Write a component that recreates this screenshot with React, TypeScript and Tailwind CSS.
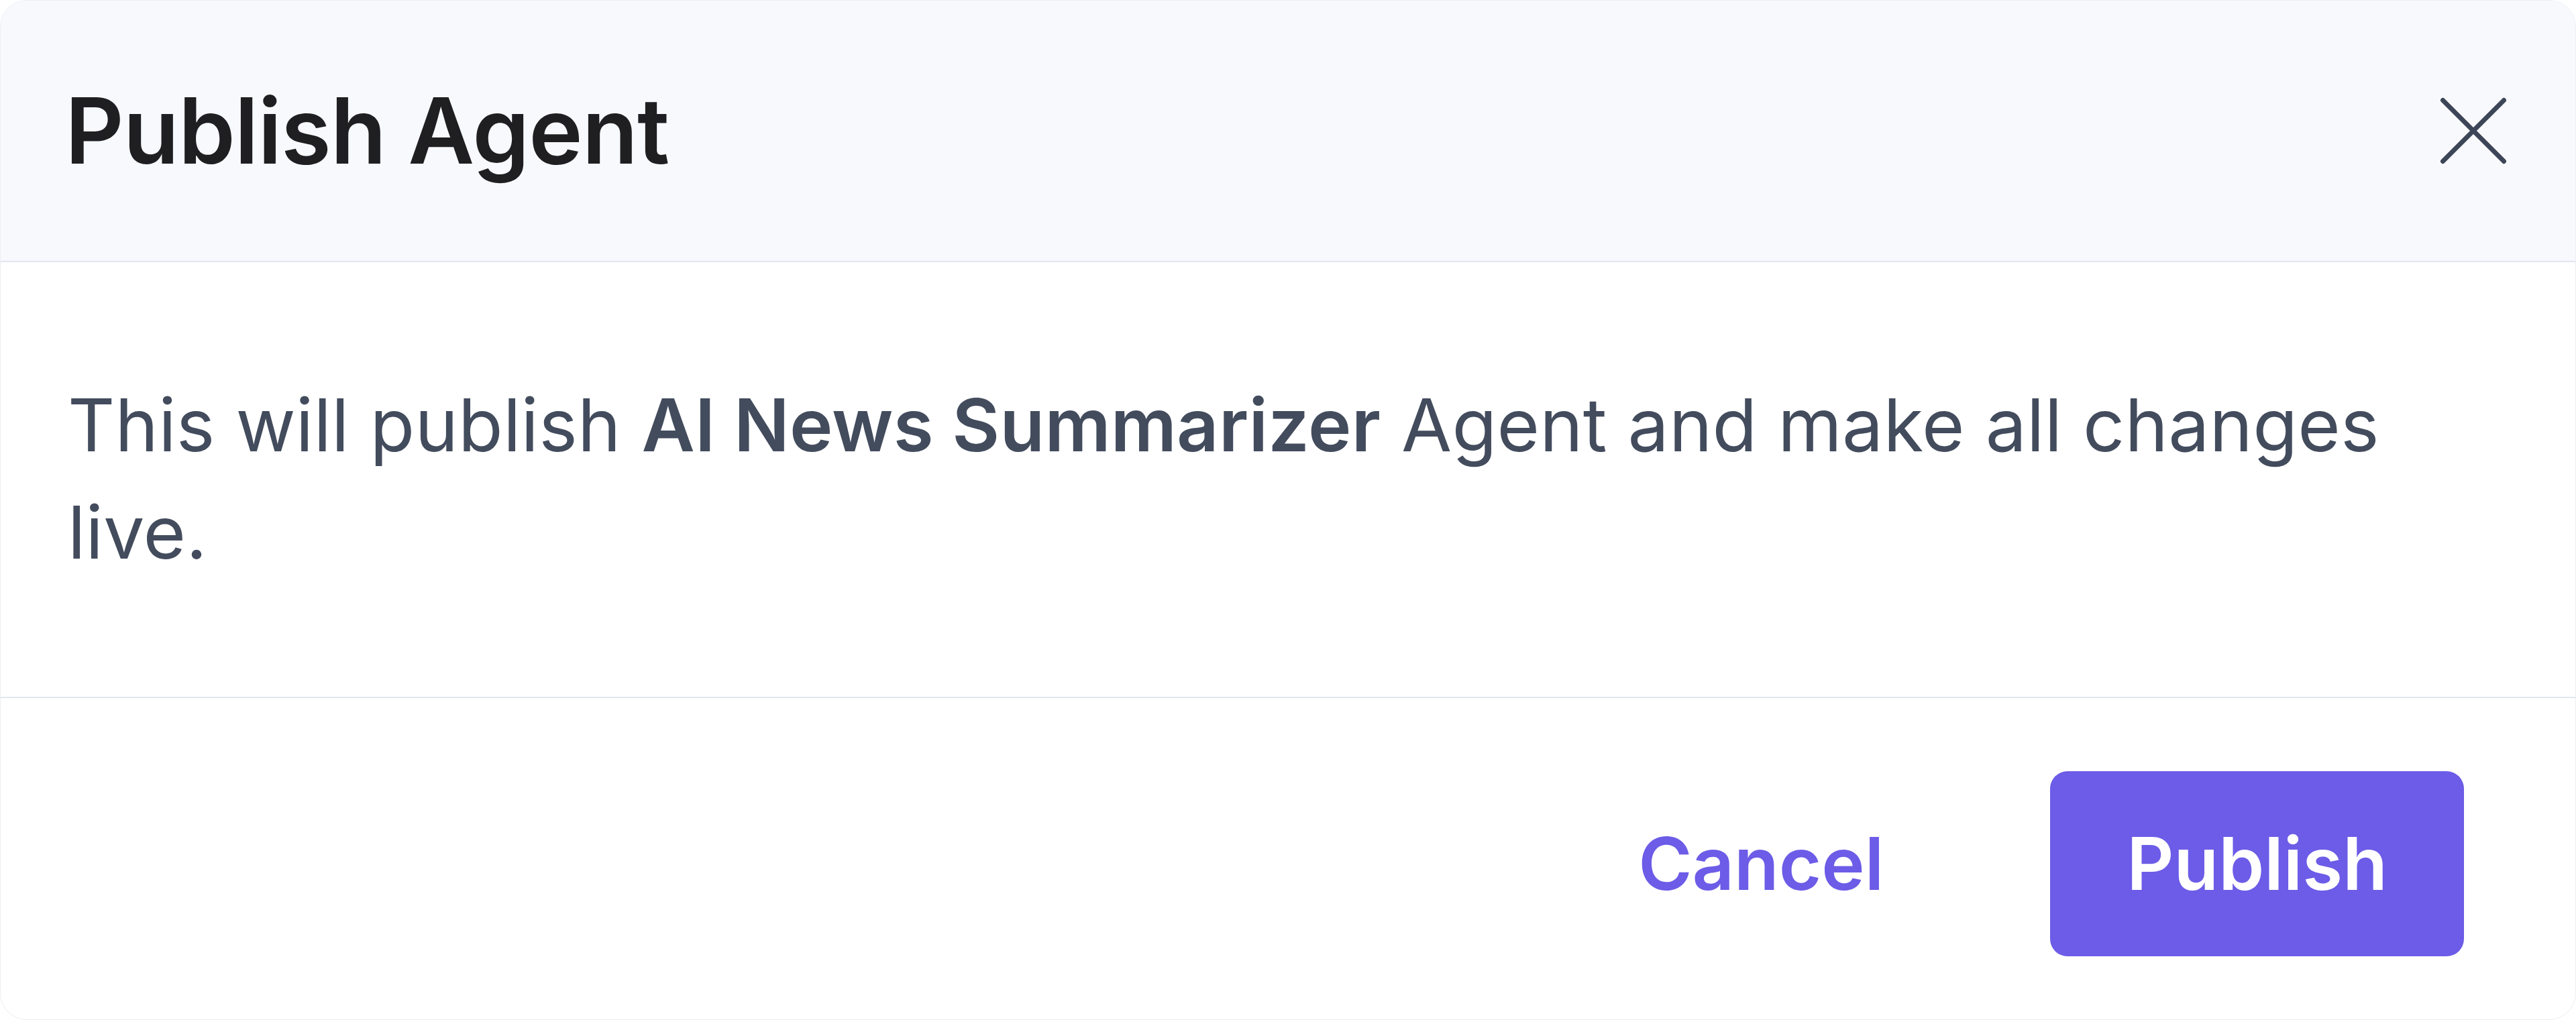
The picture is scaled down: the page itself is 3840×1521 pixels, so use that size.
export default function App() {
  return (
    <div className="h-[1521px] w-[3840px] bg-white font-['Inter','Liberation_Sans',sans-serif]">
      <div className="flex h-full flex-col overflow-hidden rounded-[40px] border border-[#eceef3] bg-white">
        <header className="flex h-[390px] shrink-0 items-center justify-between border-b-2 border-[#e3e5ef] bg-[#f8f9fc] pl-[96px] pr-[92px]">
          <h2 className="text-[136px] font-semibold leading-[190px] tracking-[-1px] text-[#1f1f21]">
            Publish Agent
          </h2>
          <button className="flex h-[120px] w-[120px] items-center justify-center text-[#3d4658]">
            <svg width="104" height="104" viewBox="0 0 24 24" fill="none" stroke="currentColor" strokeWidth="1.6" strokeLinecap="round">
              <path d="M1.5 1.5L22.5 22.5M22.5 1.5L1.5 22.5" />
            </svg>
          </button>
        </header>

        <section className="border-b-2 border-[#e3e5ef] px-[100px] pb-[166px] pt-[162px]">
          <p className="text-[109px] leading-[160px] tracking-[0.2px] text-[#434c5d]">
            This will publish <span className="font-semibold">AI News Summarizer</span> Agent and make all changes live.
          </p>
        </section>

        <footer className="flex items-start justify-end gap-[134px] pr-[166px] pt-[109px]">
          <button className="flex h-[276px] items-center px-[114px] text-[109px] font-semibold text-[#6c5ce7]">
            Cancel
          </button>
          <button className="flex h-[276px] items-center rounded-[26px] bg-[#6c5ce7] px-[114px] text-[109px] font-semibold text-white">
            Publish
          </button>
        </footer>
      </div>
    </div>
  )
}
